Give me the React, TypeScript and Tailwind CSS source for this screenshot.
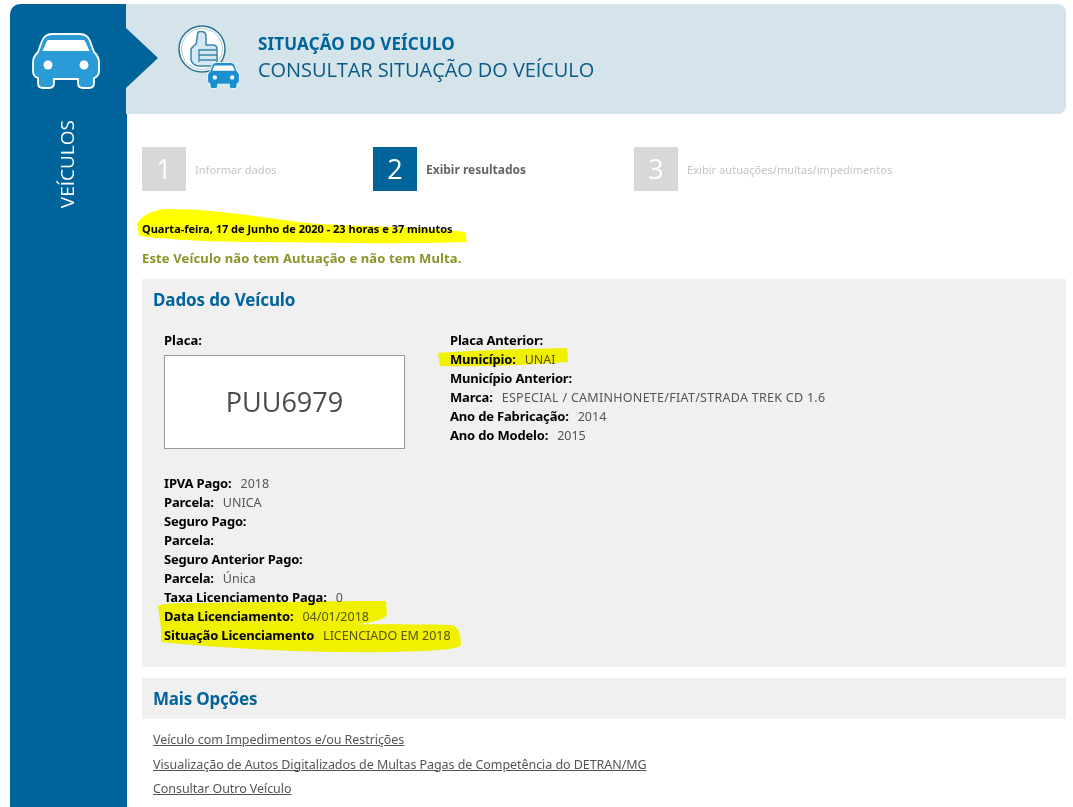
const body = '[font-family:"Noto_Sans",sans-serif]';

function CarIcon({ className, fill = "#2b9bd8" }: { className?: string; fill?: string }) {
  return (
    <svg viewBox="0 0 68 56" className={className}>
      <path
        d="M20 1h28c5 0 8 2 10 7l4 11c3 3 5 6 5 10v9c0 4-2 6-5 7v5c0 3-2 5-5 5h-6c-3 0-5-2-5-5v-4H22v4c0 3-2 5-5 5h-6c-3 0-5-2-5-5v-5c-3-1-5-3-5-7v-9c0-4 2-7 5-10l4-11c2-5 5-7 10-7z"
        fill={fill}
        stroke="#fff"
        strokeWidth="1.800"
      />
      <path d="M17 7h34c1 0 2 .5 2.500 2l4 9H10.500l4-9c.5-1.500 1.500-2 2.500-2z" fill="#fff" />
      <circle cx="16" cy="32" r="4.500" fill="#fff" />
      <circle cx="52" cy="32" r="4.500" fill="#fff" />
    </svg>
  );
}

function ThumbIcon() {
  return (
    <svg viewBox="0 0 50 50" className="absolute left-0 top-0 h-[50px] w-[50px]">
      <circle cx="24" cy="24" r="23" fill="#fff" stroke="#2f7391" strokeWidth="1.500" />
      <circle cx="24" cy="24" r="20.500" fill="#fff" stroke="#a6cde0" strokeWidth="1" />
      <path
        d="M20 7c3-1 8-1 8 4v9h7c3 0 4 2 4 4v13c0 2-2 4-4 4H21c-4 0-8-3-8-7V25c0-3 3-4 5-6 1-3 1-8 2-12z"
        fill="#d3e8f3"
        stroke="#3a86aa"
        strokeWidth="1.500"
      />
      <path d="M21 24v13M21 25h18M21 30h18M21 35h17" stroke="#3a86aa" strokeWidth="1.300" fill="none" />
    </svg>
  );
}

function Step({ n, label, active, className }: { n: string; label: string; active?: boolean; className: string }) {
  return (
    <div className={`flex items-center ${className}`}>
      <div
        className={`flex h-[44px] w-[44px] shrink-0 items-center justify-center text-[27px] text-white ${active ? "bg-[#00649b]" : "bg-[#d8d8d8]"} [font-family:"Open_Sans",sans-serif]`}
      >
        {n}
      </div>
      <span className={`ml-[9px] mt-[2px] whitespace-nowrap ${active ? "text-[12px] font-bold text-[#666]" : "text-[11.100px] text-[#c4c4c4]"}`}>
        {label}
      </span>
    </div>
  );
}

function Field({ label, value, valueClass }: { label: string; value?: string; valueClass?: string }) {
  return (
    <div className="h-[19px] whitespace-nowrap text-[13px] leading-[19px]">
      <b className="font-bold text-black tracking-[-0.18px]">{label}</b>
      {value && <span className={`ml-[9px] text-[12.500px] text-[#555] ${valueClass ?? ""}`}>{value}</span>}
    </div>
  );
}

export default function App() {
  return (
    <div className={`relative flex min-h-[807px] w-[1073px] overflow-hidden bg-white pl-[10px] pt-[4px] ${body}`}>
      {/* yellow marker scribbles, over the text and multiplied */}
      <svg className="pointer-events-none absolute left-0 top-0 z-10 h-[807px] w-[1073px] mix-blend-multiply" viewBox="0 0 1073 807">
        <g fill="#ffff00">
          <path d="M137 224c4-8 14-14 30-15 50 0 90 8 140 14 50 4 110 3 158 9l2 10c-60 2-130 1-210 0-40 0-85-2-118-6z" />
          <path d="M438 353c30-3 90-4 129-5l1 14c-40 3-95 5-128 4z" />
          <path d="M158 606c5-3 20-3 40-3 60-1 130-2 188-2l1 14c-4 6-20 9-50 11l-176 2z" />
          <path d="M161 626c80 0 200-3 290-1 8 1 10 10 10 20-4 5-30 6-70 7-70 1-150-2-230-10z" />
        </g>
      </svg>

      <aside className="flex w-[117px] shrink-0 flex-col items-center rounded-tl-[10px] bg-[#00649b]">
        <CarIcon className="-ml-[6px] mt-[29px] h-[56px] w-[68px]" />
        <div className="mt-[31px] -ml-[2px] text-[19px] font-medium leading-none text-white [writing-mode:vertical-rl] rotate-180 [font-family:'Open_Sans',sans-serif]">
          VEÍCULOS
        </div>
      </aside>

      <main className="min-w-0 flex-1">
        <header className="relative flex h-[110px] w-[940px] -ml-px items-center rounded-r-[8px] bg-[#d5e4ea] pl-[132px]">
          <div className="absolute left-0 top-[24px] h-0 w-0 border-y-[30px] border-l-[32px] border-y-transparent border-l-[#00649b]" />
          <div className="absolute left-[52px] top-[21px] h-[66px] w-[66px]">
            <ThumbIcon />
            <CarIcon className="absolute left-[29px] top-[37px] h-[27px] w-[33px]" fill="#1b8fcf" />
          </div>
          <div className="-mt-[2px]">
            <div className="text-[17px] font-bold leading-[20px] text-[#00649b] tracking-[0.15px]">
              SITUAÇÃO DO VEÍCULO
            </div>
            <div className="mt-[3px] text-[20px] font-medium leading-[26px] text-[#0a5a85] tracking-[-0.07px] [font-family:'Open_Sans',sans-serif]">
              CONSULTAR SITUAÇÃO DO VEÍCULO
            </div>
          </div>
        </header>

        <div className="pl-[15px] pr-[7px]">
          <div className="mt-[33px] flex">
            <Step n="1" label="Informar dados" className="w-[231px]" />
            <Step n="2" label="Exibir resultados" active className="w-[261px]" />
            <Step n="3" label="Exibir autuações/multas/impedimentos" />
          </div>

          <p className="mt-[30px] text-[11px] font-bold leading-[16px] text-black">
            Quarta-feira, 17 de Junho de 2020 - 23 horas e 37 minutos
          </p>
          <p className="mt-[13px] text-[13px] font-bold leading-[16px] text-[#8a9428] tracking-[0.13px]">
            Este Veículo não tem Autuação e não tem Multa.
          </p>

          <section className="mt-[13px] h-[388px] bg-[#f0f0f0] px-[22px] pt-[10px]">
            <h2 className="-ml-[11px] text-[17px] font-bold leading-[22px] text-[#00649b] tracking-[-0.12px]">
              Dados do Veículo
            </h2>
            <div className="mt-[20px] flex">
              <div className="w-[286px]">
                <div className="h-[19px] text-[13px] font-bold leading-[19px] text-black">Placa:</div>
                <div className="mt-[5px] flex h-[94px] w-[241px] items-center justify-center border border-[#999] bg-white text-[27px] text-[#4a4a4a] [font-family:'Open_Sans',sans-serif]">
                  PUU6979
                </div>
              </div>
              <div>
                <Field label="Placa Anterior:" />
                <Field label="Município:" value="UNAI" />
                <Field label="Município Anterior:" />
                <Field label="Marca:" value="ESPECIAL / CAMINHONETE/FIAT/STRADA TREK CD 1.6" valueClass="tracking-[0.28px]" />
                <Field label="Ano de Fabricação:" value="2014" />
                <Field label="Ano do Modelo:" value="2015" />
              </div>
            </div>
            <div className="mt-[25px]">
              <Field label="IPVA Pago:" value="2018" />
              <Field label="Parcela:" value="UNICA" />
              <Field label="Seguro Pago:" />
              <Field label="Parcela:" />
              <Field label="Seguro Anterior Pago:" />
              <Field label="Parcela:" value="Única" />
              <Field label="Taxa Licenciamento Paga:" value="0" />
              <Field label="Data Licenciamento:" value="04/01/2018" />
              <Field label="Situação Licenciamento" value="LICENCIADO EM 2018" />
            </div>
          </section>

          <section className="mt-[11px] flex h-[41px] items-center bg-[#f0f0f0] pl-[11px]">
            <h2 className="text-[17px] font-bold text-[#00649b] tracking-[-0.2px]">Mais Opções</h2>
          </section>

          <nav className="mt-[12px] flex flex-col items-start gap-[6px] pl-[11px] text-[12.500px] leading-[18.500px] text-[#555] tracking-[-0.06px]">
            <a className="underline" href="#">Veículo com Impedimentos e/ou Restrições</a>
            <a className="underline" href="#">Visualização de Autos Digitalizados de Multas Pagas de Competência do DETRAN/MG</a>
            <a className="underline" href="#">Consultar Outro Veículo</a>
          </nav>
        </div>
      </main>
    </div>
  );
}
